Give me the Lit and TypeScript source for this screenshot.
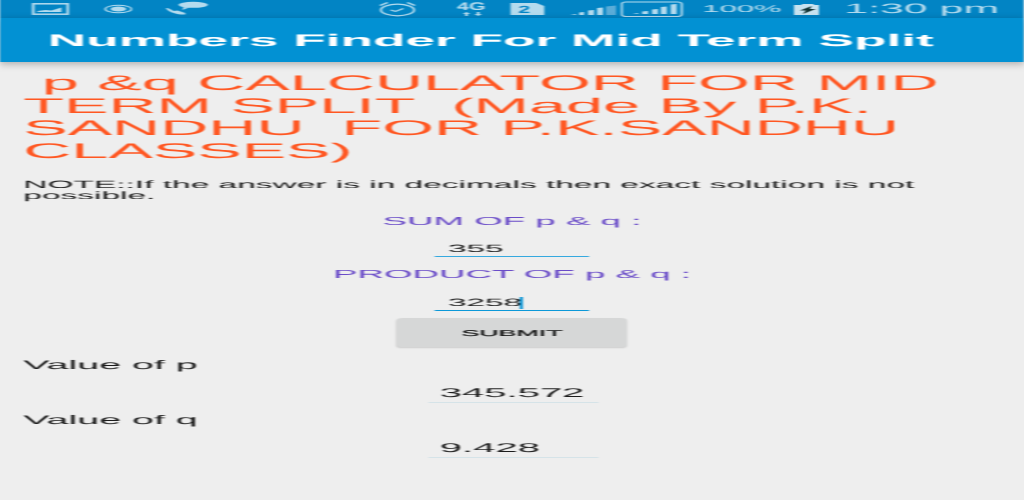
import { LitElement, html, css } from "lit";
import { customElement } from "lit/decorators.js";

@customElement("app-root")
export class AppRoot extends LitElement {
  static styles = css`
    :host { display: block; width: 1024px; height: 500px; overflow: hidden; background: #eeeeee; }
    .stage { width: 325.08px; height: 500px; transform: scaleX(3.15); transform-origin: 0 0; filter: blur(0.28px);
      text-rendering: geometricPrecision;
      font-family: "Liberation Sans", Arial, sans-serif; display: flex; flex-direction: column; background: #eeeeee; }
    .status { height: 18px; background: #0284c4; display: flex; align-items: center; color: #b4dbee; padding-left: 10.16px; flex: none; }
    .status svg { display: block; flex: none; }
    .i1 { margin-left: 11.1px; } .i2 { margin-left: 9.84px; } .i3 { margin-left: 53.3px; } .i4 { margin-left: 13px; }
    .i5 { margin-left: 5.4px; } .i6 { margin-left: 7.6px; } .i7 { margin-left: 1.27px; } .i8 { margin-left: 3.5px; }
    .pct { font-size: 9.8px; width: 25.1px; margin-left: 5.7px; white-space: nowrap; }
    .time { font-size: 13.6px; margin-left: 7.6px; white-space: nowrap; line-height: 18px; }
    .bar { height: 44px; background: #0291d3; color: #fff; font-size: 16.9px; font-weight: 700; line-height: 45px; padding-left: 15.2px; flex: none;
      box-shadow: 0 2px 4px rgba(0,0,0,.28); position: relative; white-space: nowrap; }
    .content { padding: 11px 7.4px 0; display: flex; flex-direction: column; }
    h1 { margin: 0; font-size: 21.15px; font-weight: 400; line-height: 22.7px; color: #ff5722; white-space: pre; }
    .note { margin: 15.7px 0 0; font-size: 10.63px; line-height: 11px; color: #1c1c1c; white-space: pre; }
    .center { display: flex; flex-direction: column; align-items: center; }
    .lab { color: #6a4cc8; font-size: 11.65px; line-height: 18px; white-space: nowrap; }
    .lab1 { margin-top: 11.5px; }
    .lab2 { margin-top: 9px; }
    .input { width: 44.8px; height: 14px; margin-top: 6px; padding: 5px 0 0 4.1px; border-bottom: 1px solid #35a9df;
      font-size: 10.6px; line-height: 15px; color: #1c1c1c; display: flex; align-items: center; }
    .input2 { margin-top: 7px; border-bottom-color: #0b98d8; }
    .caret { display: inline-block; width: 1.05px; height: 12px; background: #0b95d6; margin-left: -.4px; }
    .btn { width: 73px; height: 29px; margin-top: 7px; background: #d6d7d7; border-radius: 2px; box-shadow: 0 1px 1px rgba(0,0,0,.14);
      font-size: 8.5px; color: #111; display: flex; align-items: center; justify-content: center; -webkit-text-stroke: .2px #111; }
    .res-label { font-size: 12.5px; line-height: 18px; color: #1c1c1c; margin-top: 8px; }
    .res-label.first { margin-top: 9px; }
    .res { align-self: center; height: 18px; margin-top: 9px; padding-top: 1px; border-bottom: 1px solid #d5e3e8; font-size: 12.7px; line-height: 19px; color: #1c1c1c;
      padding-left: 4.1px; width: 49.9px; }
  `;

  render() {
    return html`<div class="stage">
      <div class="status">
        <svg width="12.06" height="12" viewBox="0 0 19 12" preserveAspectRatio="none"><rect x=".8" y=".8" width="17.4" height="10.4" fill="none" stroke="#b4dbee" stroke-width="1.5"/><path d="M3 9V8l4-1 3 .5 5-3v4.500z" fill="#b4dbee"/></svg>
        <svg class="i1" width="9.2" height="10" viewBox="0 0 15 10" preserveAspectRatio="none"><ellipse cx="7.500" cy="5" rx="6.800" ry="3.800" fill="none" stroke="#b4dbee" stroke-width="1"/><ellipse cx="7.500" cy="5" rx="4" ry="2.500" fill="#b4dbee"/></svg>
        <svg class="i2" width="14.3" height="16" viewBox="0 0 23 16" preserveAspectRatio="none"><path d="M1 7c2 0 3 2 4 3l2-.5 4 2.500v1.500c-5 .5-9-3-10-6.500z" fill="#b4dbee"/><ellipse cx="15" cy="3.800" rx="7.500" ry="3" fill="#b4dbee"/><path d="M10 6l-.5 3 3.500-2.500z" fill="#b4dbee"/></svg>
        <svg class="i3" width="12.4" height="16" viewBox="0 0 20 16" preserveAspectRatio="none"><ellipse cx="10" cy="9" rx="8.500" ry="5.800" fill="none" stroke="#b4dbee" stroke-width="1.200"/><path d="M6.500 9l2.500 1.500L13 7.500" fill="none" stroke="#b4dbee" stroke-width="1"/><path d="M1 4.500L5 1.500M19 4.500L15 1.500" stroke="#b4dbee" stroke-width="1.200"/></svg>
        <svg class="i4" width="11.75" height="16" viewBox="0 0 19 16" preserveAspectRatio="none"><text x="0" y="8.500" font-family="Liberation Sans" font-weight="700" font-size="11" fill="#b4dbee">4G</text><path d="M5 11l2 2H5.700v2H4.300v-2H3zM11 15l-2-2h1.300v-2h1.400v2H13z" fill="#b4dbee"/></svg>
        <svg class="i5" width="10.8" height="12" viewBox="0 0 17 12" preserveAspectRatio="none"><path d="M0 0h13l4 3v9H0z" fill="#b4dbee"/><text x="4" y="10" font-family="Liberation Sans" font-weight="700" font-size="10.500" fill="#0284c4">2</text></svg>
        <svg class="i6" width="15.2" height="13" viewBox="0 0 24 13" preserveAspectRatio="none"><path d="M0 12l3-1v1zM4.500 12v-2.500L7 9v3zM9 12V7.500L12 7v5zM13.500 12V5l3-.5V12z" fill="#b4dbee"/><path d="M18 12V3.500L23 2.500V12z" fill="#5aacd8"/></svg>
        <svg class="i7" width="20" height="16" viewBox="0 0 32 16" preserveAspectRatio="none"><rect x=".6" y="1" width="30.500" height="14.500" rx="2" fill="none" stroke="#b4dbee" stroke-width="1.100"/><path d="M6 13l3-1v1zM11 13v-2.500l3-.5v3zM16 13V8.500l3-.5v5zM20.500 13V6l3-.5V13zM25.500 13V3.500l3-.5v10z" fill="#b4dbee"/></svg>
        <span class="pct">100%</span>
        <svg class="i8" width="8.9" height="11" viewBox="0 -1 14 11" preserveAspectRatio="none"><path d="M0 0h4V-1h6V0h4v10H0z" fill="#c8e3f0"/><path d="M9 1L3 5.500h3L4.500 9 11 4H8z" fill="#133"/></svg>
        <span class="time">1:30 pm</span>
      </div>
      <div class="bar">Numbers Finder For Mid Term Split</div>
      <div class="content">
        <h1> p &amp;q CALCULATOR FOR MID
TERM SPLIT  (Made By P.K.
SANDHU  FOR P.K.SANDHU
CLASSES)</h1>
        <p class="note">NOTE::If the answer is in decimals then exact solution is not
possible.</p>
        <div class="center">
          <div class="lab lab1">SUM OF p &amp; q :</div>
          <div class="input">355</div>
          <div class="lab lab2">PRODUCT OF p &amp; q :</div>
          <div class="input input2">3258<span class="caret"></span></div>
          <div class="btn">SUBMIT</div>
        </div>
        <div class="res-label first">Value of p</div>
        <div class="res">345.572</div>
        <div class="res-label">Value of q</div>
        <div class="res">9.428</div>
      </div>
    </div>`;
  }
}
